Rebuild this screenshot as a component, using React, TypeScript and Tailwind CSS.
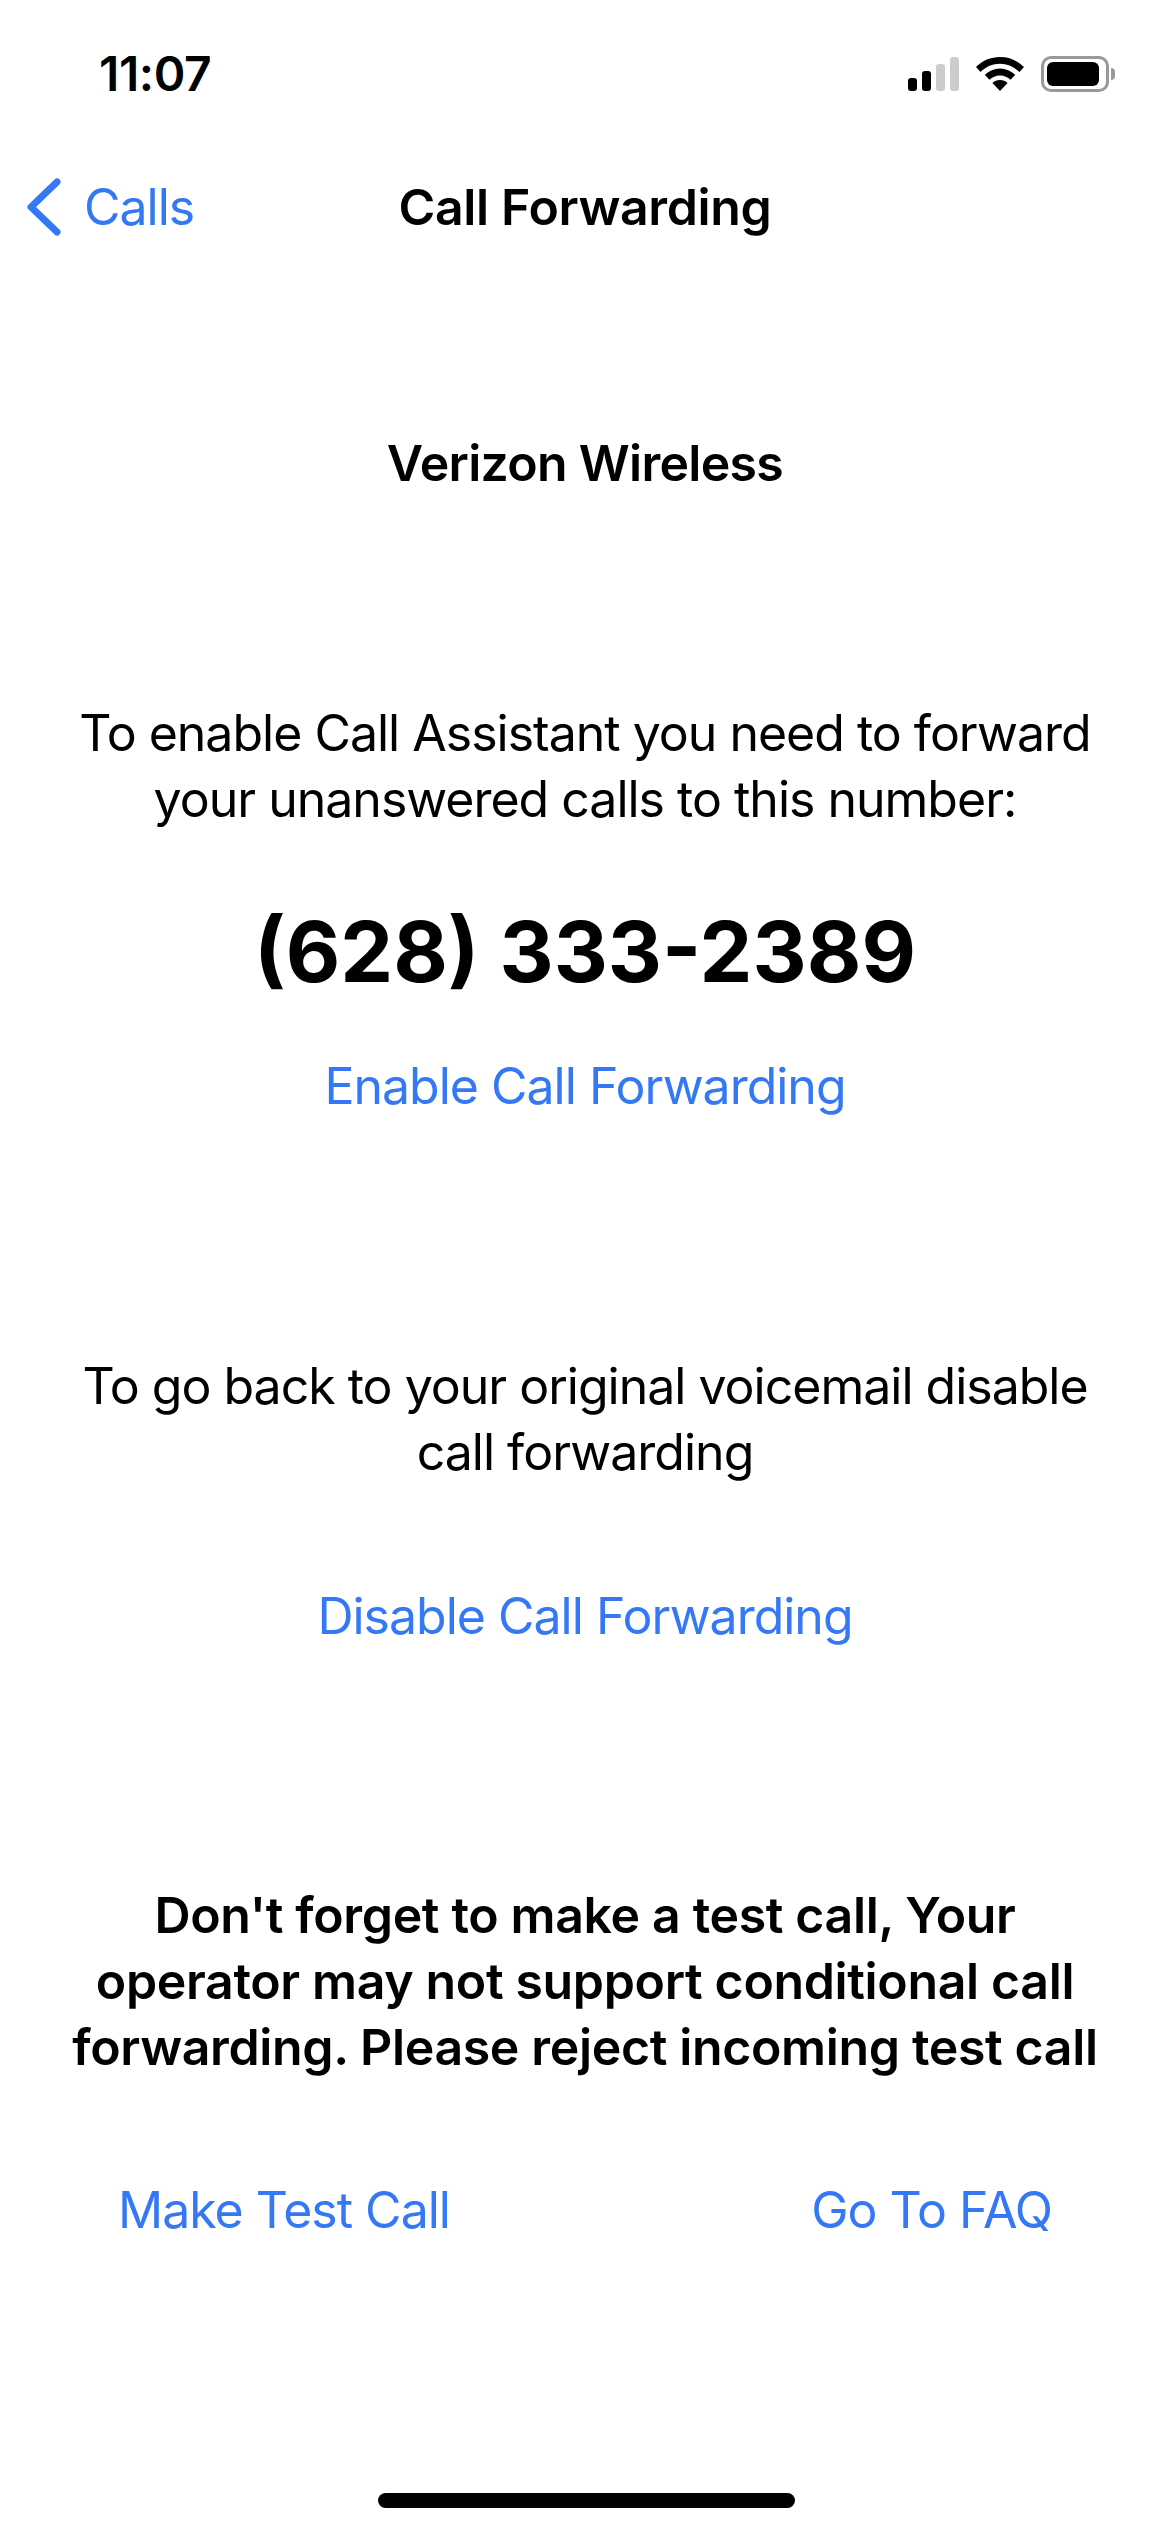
const font = "font-['Inter','Liberation_Sans',sans-serif]";

function StatusIcons() {
  return (
    <div className="flex items-center gap-[16px]">
      <svg width="52" height="36" viewBox="0 0 52 36" className="block">
        <rect x="1" y="22" width="9" height="13" rx="3" fill="#000" />
        <rect x="15" y="15" width="9" height="20" rx="3" fill="#000" />
        <rect x="29" y="8" width="9" height="27" rx="3" fill="#ccc" />
        <rect x="43" y="1" width="9" height="34" rx="3" fill="#ccc" />
      </svg>
      <svg width="50" height="36" viewBox="0 0 50 36" className="block">
        <path d="M25 1C15.5 1 7.5 4.6 1 11l4.5 5C11 10.700 17.500 7.800 25 7.800S39 10.700 44.500 16L49 11C42.500 4.600 34.500 1 25 1Z" fill="#000" />
        <path d="M25 12.500C19 12.500 14 14.800 9.800 18.800l4.600 5C17.300 21.100 20.900 19.500 25 19.500s7.700 1.600 10.600 4.300l4.600-5C36 14.800 31 12.500 25 12.500Z" fill="#000" />
        <path d="M25 24c-3 0-5.600 1.200-7.600 3.100L25 35l7.600-7.900C30.600 25.200 28 24 25 24Z" fill="#000" />
      </svg>
      <div className="flex items-center gap-[2px]">
        <div className="flex h-[36px] w-[68px] items-center rounded-[10px] border-[3px] border-[#999] p-[3px]">
          <div className="h-full w-[52px] rounded-[6px] bg-black" />
        </div>
        <div className="h-[12px] w-[4px] rounded-r-full bg-[#999]" />
      </div>
    </div>
  );
}

function BackChevron() {
  return (
    <svg width="36" height="58" viewBox="0 0 36 58" className="block">
      <path d="M31 4 5 29l26 25" fill="none" stroke="#3478f6" strokeWidth="7" strokeLinecap="round" strokeLinejoin="round" />
    </svg>
  );
}

export default function App() {
  return (
    <div className={`relative flex h-[2532px] w-[1170px] flex-col overflow-hidden bg-white text-black ${font}`}>
      {/* Status bar */}
      <div className="flex h-[148px] shrink-0 items-center justify-between pl-[99px] pr-[55px]">
        <span className="text-[48px] leading-none font-semibold tracking-[-0.4px]">11:07</span>
        <StatusIcons />
      </div>

      {/* Nav bar */}
      <div className="relative flex h-[118px] shrink-0 items-center justify-center">
        <button className="absolute left-[26px] flex items-center gap-[22px] text-[#3478f6]">
          <BackChevron />
          <span className="text-[50px] leading-none tracking-[-1px]">Calls</span>
        </button>
        <h1 className="text-[50px] leading-none font-semibold tracking-[-0.35px]">Call Forwarding</h1>
      </div>

      {/* Content */}
      <div className="flex flex-col items-center text-center">
        <p className="mt-[164px] text-[50px] leading-[66px] font-semibold tracking-[-0.7px]">Verizon Wireless</p>

        <p className="mt-[204px] text-[50px] leading-[66px] tracking-[-1px]">
          To enable Call Assistant you need to forward
          <br />
          your unanswered calls to this number:
        </p>
        <p className="mt-[70px] text-[84px] leading-[100px] font-bold">(628) 333-2389</p>
        <a className="mt-[51px] text-[50px] leading-[66px] tracking-[-1px] text-[#3478f6]">Enable Call Forwarding</a>

        <p className="mt-[234px] text-[50px] leading-[66px] tracking-[-1px]">
          To go back to your original voicemail disable
          <br />
          call forwarding
        </p>
        <a className="mt-[98px] text-[50px] leading-[66px] tracking-[-1px] text-[#3478f6]">Disable Call Forwarding</a>

        <p className="mt-[233px] text-[50px] leading-[66px] font-semibold tracking-[-0.35px]">
          Don't forget to make a test call, Your
          <br />
          operator may not support conditional call
          <br />
          forwarding. Please reject incoming test call
        </p>

        <div className="mt-[97px] flex w-full justify-between pl-[118px] pr-[118px] text-[50px] leading-[66px] tracking-[-1px] text-[#3478f6]">
          <a>Make Test Call</a>
          <a>Go To FAQ</a>
        </div>
      </div>

      {/* Home indicator */}
      <div className="absolute bottom-[24px] left-[378px] h-[15px] w-[417px] rounded-full bg-black" />
    </div>
  );
}
